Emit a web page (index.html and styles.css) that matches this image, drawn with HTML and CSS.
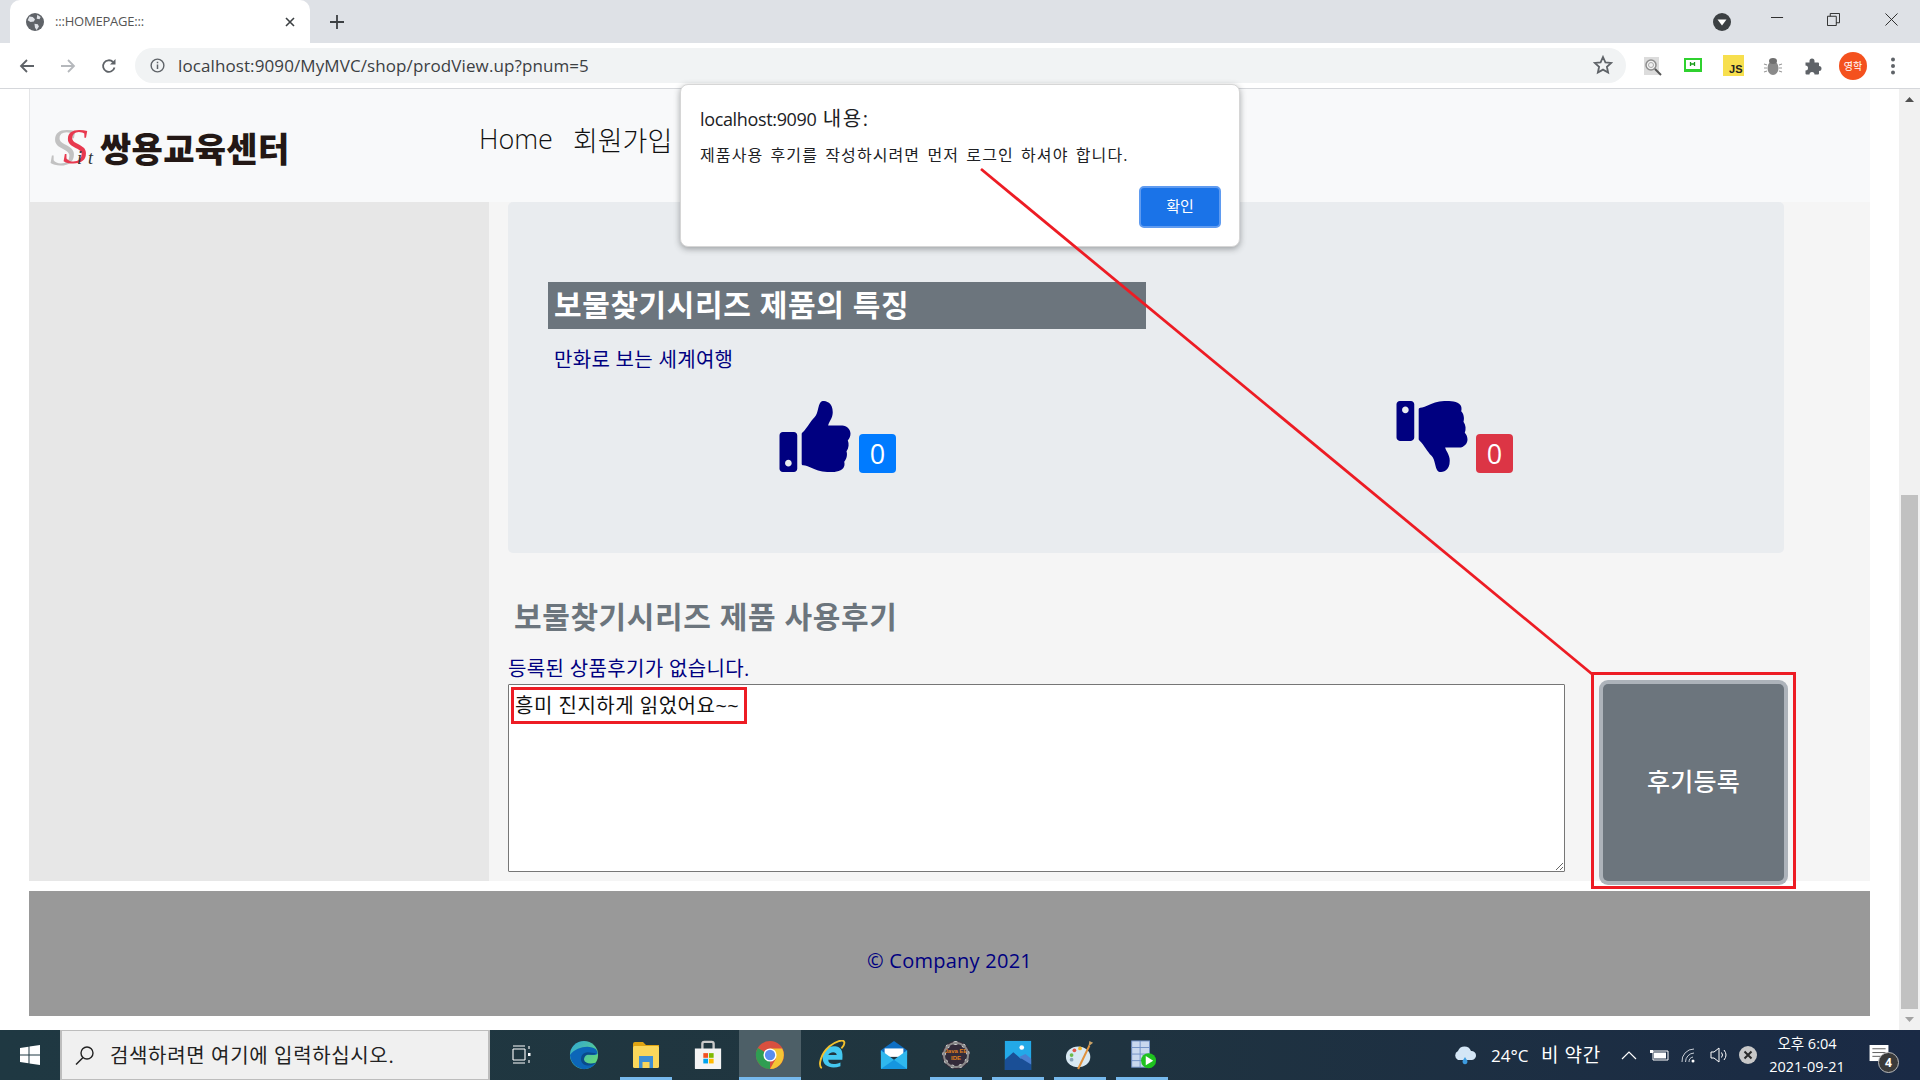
FILE: index.html
```html
<!DOCTYPE html>
<html lang="ko">
<head>
<meta charset="utf-8">
<title>:::HOMEPAGE:::</title>
<link rel="stylesheet" href="styles.css">
</head>
<body>
<div class="app">
  <div class="tabstrip">
    <div class="tab">
      <svg class="favicon" viewBox="0 0 16 16"><circle cx="8" cy="8" r="8" fill="#5f6368"/><path d="M3 3l3 .5 2 2-1 2-3 .5L1.500 6.500zM10 1.500l3 2-1 2-2.500-.5zM7.500 9.500l3 .5 1 2-2 3-1.500-2z" fill="#dee1e6"/></svg>
      <span class="tab-title">:::HOMEPAGE:::</span>
      <svg class="tab-close" viewBox="0 0 10 10"><path d="M1 1l8 8M9 1l-8 8" stroke="#3c4043" stroke-width="1.600"/></svg>
    </div>
    <svg class="newtab" viewBox="0 0 14 14"><path d="M7 0v14M0 7h14" stroke="#3c4043" stroke-width="1.800"/></svg>
    <div class="winctl">
      <svg class="tabsearch" viewBox="0 0 18 18"><circle cx="9" cy="9" r="9" fill="#3c4043"/><path d="M4.500 6.500h9L9 12.500z" fill="#fff"/></svg>
      <svg class="wc wc-min" viewBox="0 0 14 14"><path d="M0 7h13" stroke="#222" stroke-width="1"/></svg>
      <svg class="wc wc-max" viewBox="0 0 14 14"><path d="M.5 3.500h9.500v10H.5zM3.500 3.500V.5h10v10H10" fill="none" stroke="#222" stroke-width="1"/></svg>
      <svg class="wc wc-close" viewBox="0 0 14 14"><path d="M.5.5l13 13M13.500.5l-13 13" stroke="#222" stroke-width="1"/></svg>
    </div>
  </div>

  <div class="toolbar">
    <svg class="nav-ic" viewBox="0 0 16 16"><path d="M15 8H2M8 2L2 8l6 6" fill="none" stroke="#5f6368" stroke-width="1.800"/></svg>
    <svg class="nav-ic" viewBox="0 0 16 16"><path d="M1 8h13M8 2l6 6-6 6" fill="none" stroke="#b5b8bc" stroke-width="1.800"/></svg>
    <svg class="nav-ic" viewBox="0 0 16 16"><path d="M13.500 9.500A5.800 5.800 0 1 1 12 4" fill="none" stroke="#5f6368" stroke-width="1.800"/><path d="M14.500 1v5.500H9z" fill="#5f6368"/></svg>
    <div class="omnibox">
      <svg class="info" viewBox="0 0 16 16"><circle cx="8" cy="8" r="6.800" fill="none" stroke="#5f6368" stroke-width="1.500"/><path d="M7.200 7h1.600v4.800H7.200zM7.200 4h1.600v1.600H7.200z" fill="#5f6368"/></svg>
      <span class="url">localhost:9090/MyMVC/shop/prodView.up?pnum=5</span>
      <svg class="star" viewBox="0 0 20 20"><path d="M10 2l2.400 5.300 5.800.6-4.300 3.900 1.200 5.700-5.100-2.900-5.100 2.900 1.200-5.700L1.800 7.900l5.800-.6z" fill="none" stroke="#5f6368" stroke-width="1.800"/></svg>
    </div>
    <div class="exts">
      <span class="ext-slot"><svg viewBox="0 0 20 20"><rect x="1" y="1" width="15" height="18" fill="#dcdcdc"/><circle cx="8" cy="9" r="5" fill="#f1f1f1" stroke="#8d8d8d" stroke-width="1.500"/><circle cx="8" cy="9" r="2.500" fill="none" stroke="#aaa"/><path d="M12 13l6 6" stroke="#555" stroke-width="2"/></svg></span>
      <span class="ext-slot"><svg viewBox="0 0 20 20"><rect x="2" y="3" width="16" height="11" fill="#fff" stroke="#2fd12f" stroke-width="2"/><rect x="1" y="13" width="18" height="3" fill="#2fd12f"/><path d="M7.500 6v4M11.500 6v4M7.500 8h4" stroke="#1a9c1a" stroke-width="1.300"/></svg></span>
      <span class="ext-slot"><span class="jsbadge">JS</span></span>
      <span class="ext-slot"><svg viewBox="0 0 20 20"><ellipse cx="10" cy="12" rx="5.500" ry="7" fill="#8a8a8a"/><ellipse cx="10" cy="5" rx="4" ry="3" fill="#6f6f6f"/><path d="M1 8l3 1M1 12h3M1 16l3-1M19 8l-3 1M19 12h-3M19 16l-3-1" stroke="#999" stroke-width="1.200"/></svg></span>
      <span class="ext-slot"><svg viewBox="0 0 20 20"><path d="M1 8h4V6.500a2.500 2.500 0 0 1 5 0V8h3.500a1 1 0 0 1 1 1v2.500a2.500 2.500 0 0 1 0 5V19a1 1 0 0 1-1 1H10a2.500 2.500 0 0 0-5 0H2a1 1 0 0 1-1-1v-3a2.500 2.500 0 0 0 0-5z" fill="#5f6368" transform="translate(1.500 -1.500)"/></svg></span>
      <span class="ext-slot"><span class="avatar">영학</span></span>
      <span class="ext-slot"><svg viewBox="0 0 20 20"><circle cx="10" cy="3.500" r="2" fill="#5f6368"/><circle cx="10" cy="10" r="2" fill="#5f6368"/><circle cx="10" cy="16.500" r="2" fill="#5f6368"/></svg></span>
    </div>
  </div>

  <div class="viewport">
    <div class="page">
      <header class="site-header">
        <div class="logo">
          <span class="logo-mark"><span class="s-grey">S</span><span class="s-red">S</span><span class="s-it">it</span></span>
          <span class="logo-name">쌍용교육센터</span>
        </div>
        <nav class="site-nav"><a>Home</a><a>회원가입</a></nav>
      </header>
      <div class="content">
        <aside class="sidebar"></aside>
        <main class="main">
          <section class="jumbo">
            <h2 class="feature-title">보물찾기시리즈 제품의 특징</h2>
            <p class="feature-text">만화로 보는 세계여행</p>
            <div class="votes">
              <div class="vote">
                <svg class="thumb" viewBox="0 0 512 512"><path d="M104 224H24c-13.255 0-24 10.745-24 24v240c0 13.255 10.745 24 24 24h80c13.255 0 24-10.745 24-24V248c0-13.255-10.745-24-24-24zM64 472c-13.255 0-24-10.745-24-24s10.745-24 24-24 24 10.745 24 24-10.745 24-24 24zM384 81.452c0 42.416-25.970 66.208-33.277 94.548h101.723c33.397 0 59.397 27.746 59.553 58.098.084 17.938-7.546 37.249-19.439 49.197l-.11.11c9.836 23.337 8.237 56.037-9.308 79.469 8.681 25.895-.069 57.704-16.382 74.757 4.298 17.598 2.244 32.575-6.148 44.632C440.202 511.587 389.616 512 346.839 512l-2.845-.001c-48.287-.017-87.806-17.598-119.560-31.725-15.957-7.099-36.821-15.887-52.651-16.178-6.540-.12-11.783-5.457-11.783-11.998v-213.770c0-3.200 1.282-6.271 3.558-8.521 39.614-39.144 56.648-80.587 89.117-113.111 14.804-14.832 20.188-37.236 25.393-58.902C282.515 39.293 291.817 0 312 0c24 0 72 8 72 81.452z"/></svg>
                <span class="badge badge-up">0</span>
              </div>
              <div class="vote">
                <svg class="thumb" viewBox="0 0 512 512"><g transform="translate(0 512) scale(1 -1)"><path d="M104 224H24c-13.255 0-24 10.745-24 24v240c0 13.255 10.745 24 24 24h80c13.255 0 24-10.745 24-24V248c0-13.255-10.745-24-24-24zM64 472c-13.255 0-24-10.745-24-24s10.745-24 24-24 24 10.745 24 24-10.745 24-24 24zM384 81.452c0 42.416-25.970 66.208-33.277 94.548h101.723c33.397 0 59.397 27.746 59.553 58.098.084 17.938-7.546 37.249-19.439 49.197l-.11.11c9.836 23.337 8.237 56.037-9.308 79.469 8.681 25.895-.069 57.704-16.382 74.757 4.298 17.598 2.244 32.575-6.148 44.632C440.202 511.587 389.616 512 346.839 512l-2.845-.001c-48.287-.017-87.806-17.598-119.560-31.725-15.957-7.099-36.821-15.887-52.651-16.178-6.540-.12-11.783-5.457-11.783-11.998v-213.770c0-3.200 1.282-6.271 3.558-8.521 39.614-39.144 56.648-80.587 89.117-113.111 14.804-14.832 20.188-37.236 25.393-58.902C282.515 39.293 291.817 0 312 0c24 0 72 8 72 81.452z"/></g></svg>
                <span class="badge badge-down">0</span>
              </div>
            </div>
          </section>
          <h2 class="review-title">보물찾기시리즈 제품 사용후기</h2>
          <p class="review-empty">등록된 상품후기가 없습니다.</p>
          <div class="review-form">
            <textarea class="review-input">흥미 진지하게 읽었어요~~</textarea>
            <button class="review-btn">후기등록</button>
          </div>
        </main>
      </div>
      <footer class="site-footer">© Company 2021</footer>
    </div>
    <div class="scrollbar">
      <svg class="sb-arrow" viewBox="0 0 9 5"><path d="M4.500 0L9 5H0z" fill="#505050"/></svg>
      <div class="sb-track"><div class="sb-thumb"></div></div>
      <svg class="sb-arrow" viewBox="0 0 9 5"><path d="M0 0h9L4.500 5z" fill="#a3a3a3"/></svg>
    </div>
  </div>

  <div class="taskbar">
    <div class="start"><svg viewBox="0 0 20 20"><path d="M0 3l8.500-1.200v7.700H0zM9.500 1.600L20 0v9.500H9.500zM0 10.500h8.500v7.700L0 17zM9.500 10.500H20V20L9.500 18.400z" fill="#fff"/></svg></div>
    <div class="searchbox">
      <svg class="search-ic" viewBox="0 0 20 20"><circle cx="12" cy="8" r="6" fill="none" stroke="#222" stroke-width="1.400"/><path d="M8 12.500L1 19.500" stroke="#222" stroke-width="1.500"/></svg>
      <span class="search-text">검색하려면 여기에 입력하십시오.</span>
    </div>
    <div class="tasks">
      <div class="task"><svg viewBox="0 0 20 20"><path d="M1 1h12M1 4h12M1 15h12M1 18h12M1 4v11M13 4v11M17 1v3M17 8v3M17 15v3" fill="none" stroke="#fff" stroke-width="1.100"/><rect x="16" y="8" width="2.500" height="3" fill="#fff"/></svg></div>
      <div class="task"><svg viewBox="0 0 32 32"><defs><linearGradient id="eg" x1="0" y1="0" x2="1" y2="1"><stop offset="0" stop-color="#2ea5d8"/><stop offset="1" stop-color="#6ee26a"/></linearGradient></defs><circle cx="16" cy="16" r="15" fill="url(#eg)"/><path d="M1 16C2 27 12 32 18 31c5-.7 9-3.500 11-7-5 3-13 3-15-2-1.500-3.500 1-7 5-7 4 0 9 2 11 0 1-1 0-3-1-5C22 5 8 7 1 16z" fill="#0c66b8"/><path d="M13 22c-1-5 2-9 7-9 3 0 6 1 9 1-3 3-7 1-10 2-2 1-3 3-3 5 1 4 7 5 13 3-4 4-14 5-16-2z" fill="#0a4a8c"/></svg></div>
      <div class="task"><svg viewBox="0 0 28 30"><path d="M1 4a2 2 0 0 1 2-2h8l3 3h13v22H1z" fill="#e0a412"/><rect x="1" y="6" width="26" height="22" rx="1.500" fill="#fbd75b"/><path d="M7 28V16h14v12h-3.500v-6h-7v6z" fill="#3f8fd4"/></svg></div>
      <div class="task"><svg viewBox="0 0 30 32"><path d="M9 10V4a2 2 0 0 1 2-2h8a2 2 0 0 1 2 2v6" fill="none" stroke="#c9c9c9" stroke-width="2.500"/><path d="M1 9h28v21a1 1 0 0 1-1 1H2a1 1 0 0 1-1-1z" fill="#f4f4f4"/><rect x="10" y="14" width="5" height="5" fill="#f25022"/><rect x="16" y="14" width="5" height="5" fill="#7fba00"/><rect x="10" y="20" width="5" height="5" fill="#00a4ef"/><rect x="16" y="20" width="5" height="5" fill="#ffb900"/></svg></div>
      <div class="task task-active"><svg viewBox="0 0 32 32"><circle cx="16" cy="16" r="15" fill="#d9503f"/><path d="M16 16L3 23.500A15 15 0 0 0 16 31z" fill="#2f9e52"/><path d="M3 8.500A15 15 0 0 0 3 23.500l8-1L16 16z" fill="#2f9e52"/><path d="M16 9h13a15 15 0 0 1-13 22l6.500-11.500z" fill="#f4c534"/><circle cx="16" cy="16" r="7" fill="#fff"/><circle cx="16" cy="16" r="5.500" fill="#5a8df0"/></svg></div>
      <div class="task"><svg viewBox="0 0 32 32"><path d="M27 21H12c0 5 6 6 13 3v4c-9 3-19 1-19-9 0-9 8-14 15-12 5 1 7 6 6 14zm-6-5c0-4-7-4-9 0z" fill="#44c8f0"/><path d="M5 30C1 27 4 15 13 7 20 1 28-1 29 2c1 3-1 5-3 7" fill="none" stroke="#f2c12e" stroke-width="2"/></svg></div>
      <div class="task"><svg viewBox="0 0 32 32"><path d="M2 11L16 1l14 10v5H2z" fill="#0e6fc4"/><path d="M6 9h20v9H6z" fill="#fff"/><path d="M2 11l14 10 14-10v19a1 1 0 0 1-1 1H3a1 1 0 0 1-1-1z" fill="#2fb8ee"/><path d="M2 31l14-10 14 10z" fill="#0f8ddb" opacity=".8"/></svg></div>
      <div class="task"><span class="gear"><span class="gear-txt">Java EE<br>IDE</span></span></div>
      <div class="task"><svg viewBox="0 0 30 32"><rect x="1" y="1" width="28" height="31" fill="#23a9e8"/><circle cx="19" cy="8" r="2.500" fill="#fff"/><path d="M1 32V21l9-8 8 7 5-4 6 6v10z" fill="#1a4f96"/><path d="M16 18l7-3 6 5v6z" fill="#4a7fd0"/></svg></div>
      <div class="task"><svg viewBox="0 0 32 32"><ellipse cx="14" cy="18" rx="13" ry="11" fill="#d8e8f2"/><circle cx="7" cy="16" r="2" fill="#6cba4a"/><circle cx="10" cy="11" r="2" fill="#e2584b"/><circle cx="16" cy="9" r="2" fill="#f0b429"/><circle cx="7" cy="21" r="2" fill="#8aa4b8"/><path d="M14 31L26 6" stroke="#e0913c" stroke-width="2.200"/><path d="M25 7l1-6 4 2z" fill="#c9a267"/></svg></div>
      <div class="task"><svg viewBox="0 0 32 32"><rect x="5" y="1" width="19" height="28" fill="#c9d8ee" stroke="#6f8fc4"/><path d="M5 8h19M5 15h19M5 22h19M14 1v28" stroke="#6f8fc4"/><circle cx="23" cy="22" r="8" fill="#1fc21f"/><path d="M20 17l8 5-8 5z" fill="#fff"/></svg></div>
    </div>
    <div class="tray">
      <svg class="tray-cloud" viewBox="0 0 26 20"><path d="M6 15a5 5 0 0 1 0-9 7 7 0 0 1 13 0 4.500 4.500 0 0 1 1 9z" fill="#d4e6f6"/><path d="M13 12l2.200 3.500a2.500 2.500 0 1 1-4.400 0z" fill="#3d9be0"/></svg>
      <span class="tray-temp">24°C</span>
      <span class="tray-weather">비 약간</span>
      <svg class="tray-ic" viewBox="0 0 20 20"><path d="M3 14l7-7 7 7" fill="none" stroke="#fff" stroke-width="1.200"/></svg>
      <svg class="tray-ic" viewBox="0 0 20 20"><path d="M4 6h15v9H4z" fill="none" stroke="#fff"/><path d="M5 7.500h12v6H5zM1 5h3v3H1z" fill="#fff"/></svg>
      <svg class="tray-ic" viewBox="0 0 20 20"><path d="M3 17A12 12 0 0 1 15 4M6.500 17A9 9 0 0 1 15 8M10 17a5 5 0 0 1 4-5" fill="none" stroke="#c8ced6" stroke-width="1"/><circle cx="14" cy="16" r="1.500" fill="#fff"/></svg>
      <svg class="tray-ic" viewBox="0 0 20 20"><path d="M2 7h3l5-4v14l-5-4H2z" fill="none" stroke="#fff"/><path d="M12.500 7.500a4 4 0 0 1 0 5M15 5a8 8 0 0 1 0 10" fill="none" stroke="#fff"/></svg>
      <svg class="tray-x" viewBox="0 0 18 18"><circle cx="9" cy="9" r="9" fill="#c8c8c8"/><path d="M5.500 5.500l7 7M12.500 5.500l-7 7" stroke="#2a2a2a" stroke-width="2"/></svg>
      <div class="clock"><span>오후 6:04</span><span>2021-09-21</span></div>
      <div class="notif">
        <svg viewBox="0 0 20 18"><path d="M0 0h20v17H0z" fill="#fff"/><path d="M3 4h14M3 8h14M3 12h9" stroke="#555" stroke-width="1"/></svg>
        <span class="notif-count">4</span>
      </div>
    </div>
  </div>

  <div class="dialog">
    <div class="dialog-title">localhost:9090 <span class="dialog-ko">내용:</span></div>
    <div class="dialog-msg">제품사용 후기를 작성하시려면 먼저 로그인 하셔야 합니다.</div>
    <div class="dialog-actions"><button class="dialog-ok">확인</button></div>
  </div>

  <svg class="mark-line" viewBox="0 0 1920 1080"><path d="M981 169L1592 674" stroke="#ed1c24" stroke-width="2.800"/></svg>
  <div class="mark mark-text"></div>
  <div class="mark mark-btn"></div>
</div>
</body>
</html>
```
FILE: styles.css
```css
* { box-sizing: border-box; }
html, body { margin: 0; padding: 0; height: 100%; overflow: hidden; }
body { font-family: "Open Sans", "Noto Sans CJK KR", sans-serif; background: #fff; }
.app { position: relative; width: 1920px; height: 1080px; display: flex; flex-direction: column; overflow: hidden; }

/* tab strip */
.tabstrip { height: 43px; background: #dee1e6; display: flex; align-items: center; padding-left: 10px; flex: none; }
.tab { width: 300px; height: 43px; background: #fff; border-radius: 10px 10px 0 0; display: flex; align-items: center; padding-left: 16px; }
.favicon { width: 18px; height: 18px; flex: none; }
.tab-title { font-size: 13px; color: #555; margin: -2px 0 0 11px; letter-spacing: -0.2px; flex: 1; font-family: "Open Sans", sans-serif; }
.tab-close { width: 10px; height: 10px; margin-right: 15px; }
.newtab { width: 14px; height: 14px; margin-left: 20px; }
.winctl { margin-left: auto; display: flex; align-items: center; }
.tabsearch { width: 18px; height: 18px; margin-right: 40px; }
.wc { width: 13px; height: 13px; }
.wc-min { margin-right: 43px; margin-top: -8px; }
.wc-max { margin-right: 45px; margin-top: -4px; }
.wc-close { margin-right: 22px; margin-top: -4px; }

/* toolbar */
.toolbar { height: 46px; background: #fff; border-bottom: 1px solid #d5d7db; display: flex; align-items: center; padding-left: 19px; flex: none; }
.nav-ic { width: 16px; height: 16px; margin-right: 25px; flex: none; }
.omnibox { width: 1491px; height: 35px; margin-left: -7px; margin-top: -1px; background: #f1f3f4; border-radius: 18px; display: flex; align-items: center; padding-left: 15px; flex: none; }
.info { width: 15px; height: 15px; flex: none; }
.url { font-size: 17px; color: #3c4043; margin-left: 13px; letter-spacing: 0.1px; flex: 1; }
.star { width: 20px; height: 20px; margin-right: 13px; }
.exts { display: flex; align-items: center; margin-left: 7px; }
.ext-slot { width: 40px; height: 30px; display: flex; align-items: center; justify-content: center; }
.ext-slot svg { width: 20px; height: 20px; }
.jsbadge { width: 21px; height: 21px; background: #f7df4e; color: #222; font: 700 11px/1 "Liberation Sans", sans-serif; display: flex; align-items: flex-end; justify-content: flex-end; padding: 0 1px 1px 0; }
.avatar { width: 28px; height: 28px; border-radius: 50%; background: #f4511e; color: #fff; font-size: 10px; display: flex; align-items: center; justify-content: center; white-space: nowrap; }

/* viewport */
.viewport { flex: 1; display: flex; min-height: 0; background: #fff; }
.page { width: 1841px; margin-left: 29px; margin-right: 29px; display: flex; flex-direction: column; flex: none; }
.site-header { height: 113px; background: #f8f9fa; border-left: 1px solid #e4e5e7; display: flex; align-items: center; padding-left: 20px; flex: none; }
.logo { width: 429px; display: flex; align-items: center; margin-top: 4px; }
.logo-mark { position: relative; width: 50px; height: 36px; display: block; font-family: "Liberation Serif", serif; font-style: italic; }
.s-grey { position: absolute; left: 0; top: -8px; font-size: 52px; line-height: 52px; color: #c2c2c2; }
.s-red { position: absolute; left: 13px; top: -10px; font-size: 50px; line-height: 52px; color: #e8394f; }
.s-it { position: absolute; left: 27px; top: 19px; font-size: 18px; line-height: 18px; color: #333; letter-spacing: 6px; }
.logo-name { font-family: "Noto Sans CJK KR", sans-serif; font-weight: 900; font-size: 34px; line-height: 40px; letter-spacing: 0.300px; color: #231815; }
.site-nav { display: flex; gap: 20px; margin-top: -13px; font-size: 27px; color: #111; }
.site-nav a { font-weight: 300; }
.content { display: flex; height: 679px; flex: none; }
.sidebar { width: 460px; background: #e7e7e7; flex: none; }
.main { flex: 1; background: #f5f5f5; padding-left: 19px; }
.jumbo { width: 1276px; height: 351px; background: #e9ecef; border-radius: 5px; padding: 80px 0 0 40px; }
.feature-title { margin: 0; width: 598px; height: 47px; background: #6c757d; color: #fff; font-size: 30px; line-height: 46px; letter-spacing: 0.6px; font-weight: 700; padding-left: 6px; }
.feature-text { margin: 16px 0 0 6px; font-size: 20px; line-height: 30px; letter-spacing: 0.3px; color: #000080; }
.votes { display: flex; margin-top: 26px; padding-left: 231px; }
.vote { width: 617px; display: flex; align-items: flex-end; gap: 8px; flex: none; }
.thumb { width: 72px; height: 71px; fill: #000080; display: block; flex: none; }
.badge { width: 37px; height: 39px; margin-bottom: -1px; border-radius: 4px; color: #fff; font-size: 27px; font-weight: 400; display: flex; align-items: center; justify-content: center; flex: none; }
.badge-up { background: #007bff; }
.badge-down { background: #dc3545; }
.review-title { margin: 43px 0 0 6px; font-size: 30px; line-height: 42px; letter-spacing: 0.6px; font-weight: 700; color: #6c757d; }
.review-empty { margin: 16px 0 0; font-size: 20px; line-height: 30px; letter-spacing: 0.35px; color: #000080; }
.review-form { display: flex; align-items: flex-start; margin-top: 0; }
.review-input { width: 1057px; height: 188px; border: 1px solid #767676; border-radius: 1px; padding: 6px 6px 2px; font: 20px/30px "Open Sans", "Noto Sans CJK KR", sans-serif; letter-spacing: 0.5px; color: #111; background: #fff; margin: 0; }
.review-btn { width: 181px; height: 197px; margin-left: 38px; padding-bottom: 6px; border: 0; border-radius: 5px; background: #6c757d; color: #fff; font: 500 25px "Open Sans", "Noto Sans CJK KR", sans-serif; letter-spacing: 0.3px; box-shadow: 0 0 0 4px #adb3ba; }
.site-footer { height: 125px; margin-top: 10px; background: #999; color: #000080; font-size: 20px; letter-spacing: 0.25px; display: flex; align-items: center; justify-content: center; padding-top: 14px; flex: none; }

/* scrollbar */
.scrollbar { width: 21px; background: #f1f1f1; display: flex; flex-direction: column; align-items: center; flex: none; }
.sb-arrow { width: 9px; height: 5px; margin: 8px 0; flex: none; }
.sb-track { flex: 1; width: 17px; display: flex; flex-direction: column; }
.sb-thumb { margin-top: 385px; flex: 1; background: #c1c1c1; }

/* taskbar */
.taskbar { height: 50px; background: linear-gradient(90deg, #1f3842 0%, #20353f 50%, #1a2a45 100%); display: flex; align-items: stretch; flex: none; color: #fff; }
.start { width: 60px; display: flex; align-items: center; justify-content: center; flex: none; }
.start svg { width: 20px; height: 20px; }
.searchbox { width: 430px; margin-right: 1px; background: #f0f0f0; border: 1px solid #bdbdbd; border-width: 1px 2px; display: flex; align-items: center; padding-left: 13px; color: #222; flex: none; }
.search-ic { width: 20px; height: 20px; flex: none; }
.search-text { font-size: 20px; margin: -2px 0 0 15px; letter-spacing: 0.65px; white-space: nowrap; }
.tasks { display: flex; flex: none; }
.task { width: 62px; display: flex; align-items: center; justify-content: center; position: relative; }
.task svg { width: 30px; height: 30px; }
.task:first-child svg { width: 20px; height: 20px; }
.task:nth-child(3)::after, .task:nth-child(8)::after, .task:nth-child(9)::after, .task:nth-child(10)::after, .task:nth-child(11)::after { content: ""; position: absolute; left: 5px; right: 5px; bottom: 0; height: 3px; background: #76b9ed; }
.task-active { background: #4d5f67; }
.task-active::after { content: ""; position: absolute; left: 0; right: 0; bottom: 0; height: 3px; background: #76b9ed; }
.gear { width: 28px; height: 28px; border-radius: 50%; background: #332b3a; border: 4px dotted #cfcfcf; display: flex; align-items: center; justify-content: center; outline: 2px solid #8a8a8a; outline-offset: -3px; }
.gear-txt { font: 700 6px/7px "Liberation Sans", sans-serif; color: #e0801e; text-align: center; white-space: nowrap; }
.tray { margin-left: auto; display: flex; align-items: center; flex: none; }
.tray-cloud { width: 26px; height: 20px; margin-right: 13px; }
.tray-temp { font-size: 17px; width: 50px; }
.tray-weather { font-size: 19px; width: 78px; white-space: nowrap; letter-spacing: 0.6px; margin-top: -2px; }
.tray-ic { width: 20px; height: 20px; margin-right: 10px; }
.tray-x { width: 18px; height: 18px; flex: none; }
.clock { width: 100px; display: flex; flex-direction: column; align-items: center; font-size: 14.500px; line-height: 23px; flex: none; }
.notif { width: 63px; position: relative; display: flex; align-items: center; padding-left: 12px; flex: none; }
.notif svg { width: 20px; height: 17px; margin-top: -4px; }
.notif-count { position: absolute; left: 21px; top: 50%; margin-top: -3px; width: 21px; height: 21px; border-radius: 50%; background: #3a3a3a; border: 1px solid #bbb; font-size: 12px; font-weight: 700; display: flex; align-items: center; justify-content: center; }

/* alert dialog */
.dialog { position: absolute; left: 680px; top: 84px; width: 560px; height: 163px; background: #fff; border: 1px solid #d6d6d6; border-radius: 8px; box-shadow: 0 2px 6px rgba(60, 64, 67, .45); padding: 20px 18px 0 19px; }
.dialog-title { font-size: 18px; line-height: 28px; color: #202124; letter-spacing: -0.35px; }
.dialog-ko { font-size: 20px; letter-spacing: 1.600px; margin-left: 2px; }
.dialog-msg { margin-top: 10px; font-size: 16px; line-height: 24px; color: #202124; letter-spacing: 1.100px; word-spacing: 2px; }
.dialog-actions { display: flex; justify-content: flex-end; margin-top: 19px; }
.dialog-ok { width: 82px; height: 42px; padding-bottom: 4px; border: 2px solid #5f9bf0; border-radius: 5px; background: #1a73e8; color: #fff; font: 15px "Open Sans", "Noto Sans CJK KR", sans-serif; }

/* red annotation marks */
.mark-line { position: absolute; left: 0; top: 0; width: 1920px; height: 1080px; pointer-events: none; }
.mark { position: absolute; border: 3px solid #ed1c24; pointer-events: none; }
.mark-text { left: 511px; top: 687px; width: 236px; height: 37px; }
.mark-btn { left: 1591px; top: 672px; width: 205px; height: 217px; }
```
